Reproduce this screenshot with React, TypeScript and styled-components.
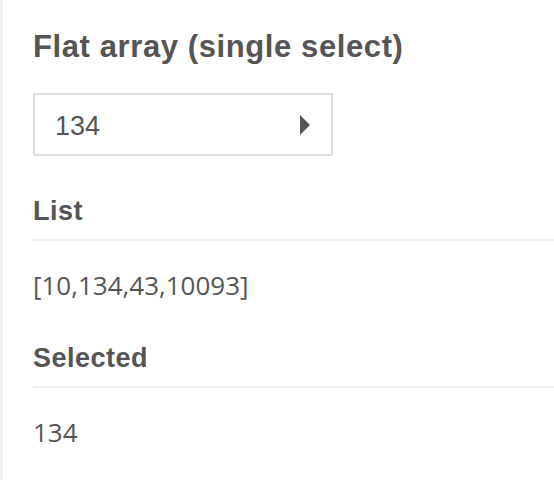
import React, { useState } from 'react';
import styled, { createGlobalStyle } from 'styled-components';

const GlobalStyle = createGlobalStyle`
  html, body {
    margin: 0;
    padding: 0;
    background: #fff;
  }
`;

const Page = styled.div`
  min-height: 100vh;
  box-sizing: border-box;
  border-left: 3px solid #efefef;
  padding: 30px 0 0 30px;
  color: #555;
  font-family: "Liberation Sans", Arial, sans-serif;
`;

const Title = styled.h1`
  margin: 0;
  font-size: 31px;
  line-height: 34px;
  font-weight: bold;
  letter-spacing: 0.6px;
`;

const Select = styled.div`
  margin-top: 29px;
  width: 300px;
  height: 63px;
  box-sizing: border-box;
  border: 2px solid #ddd;
  display: flex;
  align-items: center;
  justify-content: space-between;
  padding: 4px 21px 0 20px;
  font-size: 27px;
  line-height: 31px;
  cursor: pointer;
`;

const Caret = styled.span`
  width: 0;
  height: 0;
  margin-top: -4px;
  border-left: 10px solid #555;
  border-top: 10px solid transparent;
  border-bottom: 10px solid transparent;
`;

const Section = styled.section`
  margin-top: 40px;
`;

const Heading = styled.h2`
  margin: 0;
  padding-bottom: 12px;
  border-bottom: 2px solid #eee;
  font-size: 27px;
  line-height: 31px;
  font-weight: bold;
  letter-spacing: 0.5px;
`;

const Value = styled.div`
  margin-top: 26px;
  font-family: "Open Sans", "Noto Sans CJK SC", sans-serif;
  font-size: 26px;
  line-height: 36px;
`;

const list = [10, 134, 43, 10093];

export default function App() {
  const [selected] = useState(134);

  return (
    <Page>
      <GlobalStyle />
      <Title>Flat array (single select)</Title>
      <Select>
        <span>{selected}</span>
        <Caret />
      </Select>
      <Section>
        <Heading>List</Heading>
        <Value>{JSON.stringify(list)}</Value>
      </Section>
      <Section>
        <Heading>Selected</Heading>
        <Value>{selected}</Value>
      </Section>
    </Page>
  );
}
